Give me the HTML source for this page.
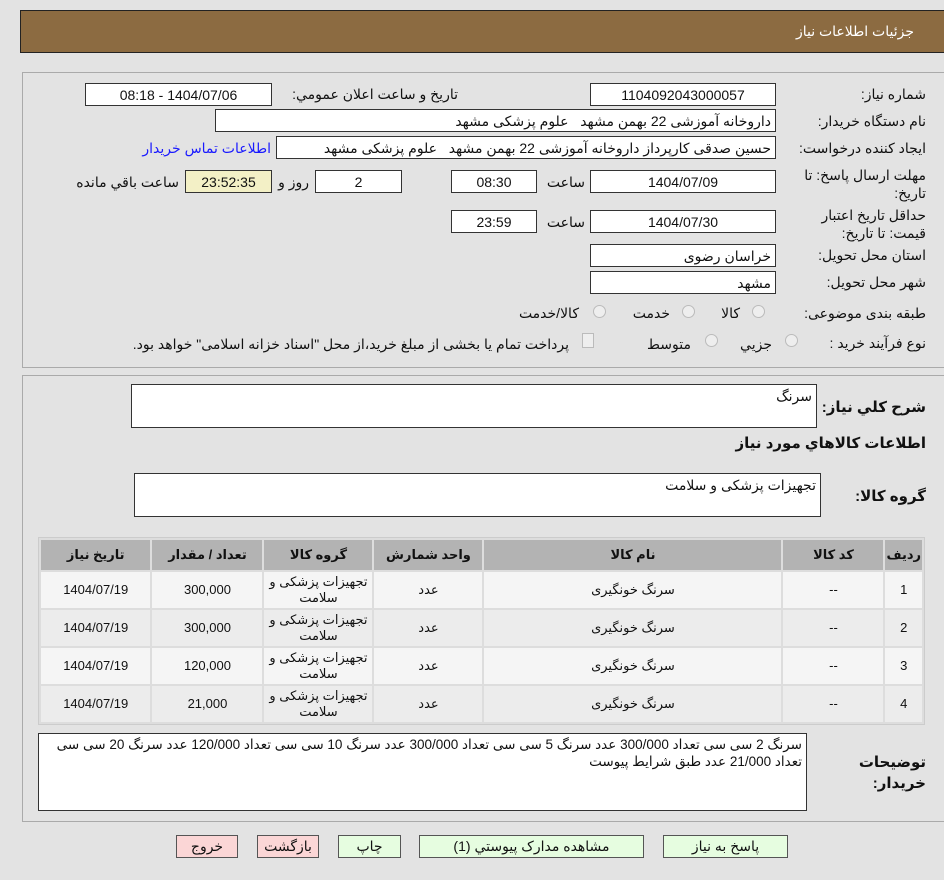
<!DOCTYPE html>
<html><head><meta charset="utf-8"><style>
body{margin:0;width:944px;height:880px;background:#e3e3e3;font-family:"Liberation Sans","DejaVu Sans",sans-serif;font-size:14px;color:#111;position:relative;overflow:hidden}
.a{position:absolute}
.box{position:absolute;background:#fff;border:1px solid #333;box-sizing:border-box;direction:rtl;padding:2px 4px;white-space:nowrap;overflow:hidden;line-height:18px}
.c{text-align:center}
.l{position:absolute;direction:rtl;white-space:nowrap}
.panel{position:absolute;border:1px solid #aaa;border-right:none;box-sizing:border-box}
table{border-collapse:separate;border-spacing:2px;position:absolute;left:38px;top:537px;width:887px;background:#ddd;border:1px solid #ccc;direction:rtl;font-size:13px}
th{background:#b3b3b3;height:28px;font-weight:bold}
td{height:34px;text-align:center;line-height:16px}
tr:nth-child(even) td{background:#f5f5f5}
tr:nth-child(odd) td{background:#ececec}
.btn{position:absolute;top:835px;height:23px;border:1px solid #555;box-sizing:border-box;text-align:center;line-height:21px;font-size:14px}
.g{background:#e6fde0}.r{background:#fbd6d6}
.rad{position:absolute;width:11px;height:11px;border:1px solid #bbb;border-radius:50%;background:#eee}
</style></head><body>
<div class="a" style="left:20px;top:10px;width:924px;height:43px;background:#8c6b41;border:1px solid #222;border-right:none;box-sizing:border-box"></div>
<div class="l" style="right:30px;top:23px;color:#fff;font-size:14px">جزئیات اطلاعات نیاز</div>
<div class="panel" style="left:22px;top:72px;width:922px;height:296px"></div>
<div class="panel" style="left:22px;top:375px;width:922px;height:447px"></div>

<div class="l" style="right:18px;top:86px">شماره نیاز:</div>
<div class="box c" style="left:590px;top:83px;width:186px;height:23px">1104092043000057</div>
<div class="l" style="right:486px;top:86px">تاریخ و ساعت اعلان عمومي:</div>
<div class="box c" style="left:85px;top:83px;width:187px;height:23px">1404/07/06 - 08:18</div>
<div class="l" style="right:18px;top:113px">نام دستگاه خریدار:</div>
<div class="box" style="left:215px;top:109px;width:561px;height:23px">داروخانه آموزشی 22 بهمن مشهد &nbsp; علوم پزشکی مشهد</div>
<div class="l" style="right:18px;top:140px">ایجاد کننده درخواست:</div>
<div class="box" style="left:276px;top:136px;width:500px;height:23px">حسین صدقی کارپرداز داروخانه آموزشی 22 بهمن مشهد &nbsp; علوم پزشکی مشهد</div>
<div class="l" style="right:673px;top:140px;color:#1a1aff">اطلاعات تماس خریدار</div>
<div class="l" style="right:18px;top:166px;line-height:18px;text-align:right">مهلت ارسال پاسخ: تا<br>تاریخ:</div>
<div class="box c" style="left:590px;top:170px;width:186px;height:23px">1404/07/09</div>
<div class="l" style="right:359px;top:174px">ساعت</div>
<div class="box c" style="left:451px;top:170px;width:86px;height:23px">08:30</div>
<div class="box c" style="left:315px;top:170px;width:87px;height:23px">2</div>
<div class="l" style="right:635px;top:174px">روز و</div>
<div class="box c" style="left:185px;top:170px;width:87px;height:23px;background:#f3f0c6">23:52:35</div>
<div class="l" style="right:765px;top:174px">ساعت باقي مانده</div>
<div class="l" style="right:18px;top:206px;line-height:18px;text-align:right">حداقل تاریخ اعتبار<br>قیمت: تا تاریخ:</div>
<div class="box c" style="left:590px;top:210px;width:186px;height:23px">1404/07/30</div>
<div class="l" style="right:359px;top:214px">ساعت</div>
<div class="box c" style="left:451px;top:210px;width:86px;height:23px">23:59</div>
<div class="l" style="right:18px;top:247px">استان محل تحویل:</div>
<div class="box" style="left:590px;top:244px;width:186px;height:23px">خراسان رضوی</div>
<div class="l" style="right:18px;top:274px">شهر محل تحویل:</div>
<div class="box" style="left:590px;top:271px;width:186px;height:23px">مشهد</div>
<div class="l" style="right:18px;top:305px">طبقه بندی موضوعی:</div>
<div class="rad" style="left:752px;top:305px"></div><div class="l" style="right:204px;top:305px">کالا</div>
<div class="rad" style="left:682px;top:305px"></div><div class="l" style="right:274px;top:305px">خدمت</div>
<div class="rad" style="left:593px;top:305px"></div><div class="l" style="right:365px;top:305px">کالا/خدمت</div>
<div class="l" style="right:18px;top:335px">نوع فرآیند خرید :</div>
<div class="rad" style="left:785px;top:334px"></div><div class="l" style="right:172px;top:336px">جزیي</div>
<div class="rad" style="left:705px;top:334px"></div><div class="l" style="right:253px;top:336px">متوسط</div>
<div class="a" style="left:582px;top:333px;width:10px;height:13px;border:1px solid #bbb;background:#eee"></div>
<div class="l" style="right:375px;top:336px">پرداخت تمام یا بخشی از مبلغ خرید،از محل "اسناد خزانه اسلامی" خواهد بود.</div>

<div class="l" style="right:18px;top:398px;font-weight:bold;font-size:15px">شرح کلي نیاز:</div>
<div class="box" style="left:131px;top:384px;width:686px;height:44px">سرنگ</div>
<div class="l" style="right:18px;top:434px;font-weight:bold;font-size:15px">اطلاعات کالاهاي مورد نیاز</div>
<div class="l" style="right:18px;top:487px;font-weight:bold;font-size:15px">گروه کالا:</div>
<div class="box" style="left:134px;top:473px;width:687px;height:44px">تجهیزات پزشکی و سلامت</div>

<table>
<tr><th style="width:30px">ردیف</th><th style="width:98px">کد کالا</th><th style="width:295px">نام کالا</th><th style="width:106px">واحد شمارش</th><th style="width:106px">گروه کالا</th><th style="width:108px">تعداد / مقدار</th><th>تاریخ نیاز</th></tr>
<tr><td>1</td><td>--</td><td>سرنگ خونگیری</td><td>عدد</td><td>تجهیزات پزشکی و سلامت</td><td>300,000</td><td>1404/07/19</td></tr>
<tr><td>2</td><td>--</td><td>سرنگ خونگیری</td><td>عدد</td><td>تجهیزات پزشکی و سلامت</td><td>300,000</td><td>1404/07/19</td></tr>
<tr><td>3</td><td>--</td><td>سرنگ خونگیری</td><td>عدد</td><td>تجهیزات پزشکی و سلامت</td><td>120,000</td><td>1404/07/19</td></tr>
<tr><td>4</td><td>--</td><td>سرنگ خونگیری</td><td>عدد</td><td>تجهیزات پزشکی و سلامت</td><td>21,000</td><td>1404/07/19</td></tr>
</table>

<div class="l" style="right:18px;top:752px;font-weight:bold;font-size:15px;line-height:21px">توضیحات<br>خریدار:</div>
<div class="box" style="left:38px;top:733px;width:769px;height:78px;white-space:normal;line-height:17px;font-size:13.5px">سرنگ 2 سی سی تعداد 300/000 عدد سرنگ 5 سی سی تعداد 300/000 عدد سرنگ 10 سی سی تعداد 120/000 عدد سرنگ 20 سی سی تعداد 21/000 عدد طبق شرایط پیوست</div>

<div class="btn r" style="left:176px;width:62px">خروج</div>
<div class="btn r" style="left:257px;width:62px">بازگشت</div>
<div class="btn g" style="left:338px;width:63px">چاپ</div>
<div class="btn g" style="left:419px;width:225px">مشاهده مدارک پیوستي (1)</div>
<div class="btn g" style="left:663px;width:125px">پاسخ به نیاز</div>
</body></html>
